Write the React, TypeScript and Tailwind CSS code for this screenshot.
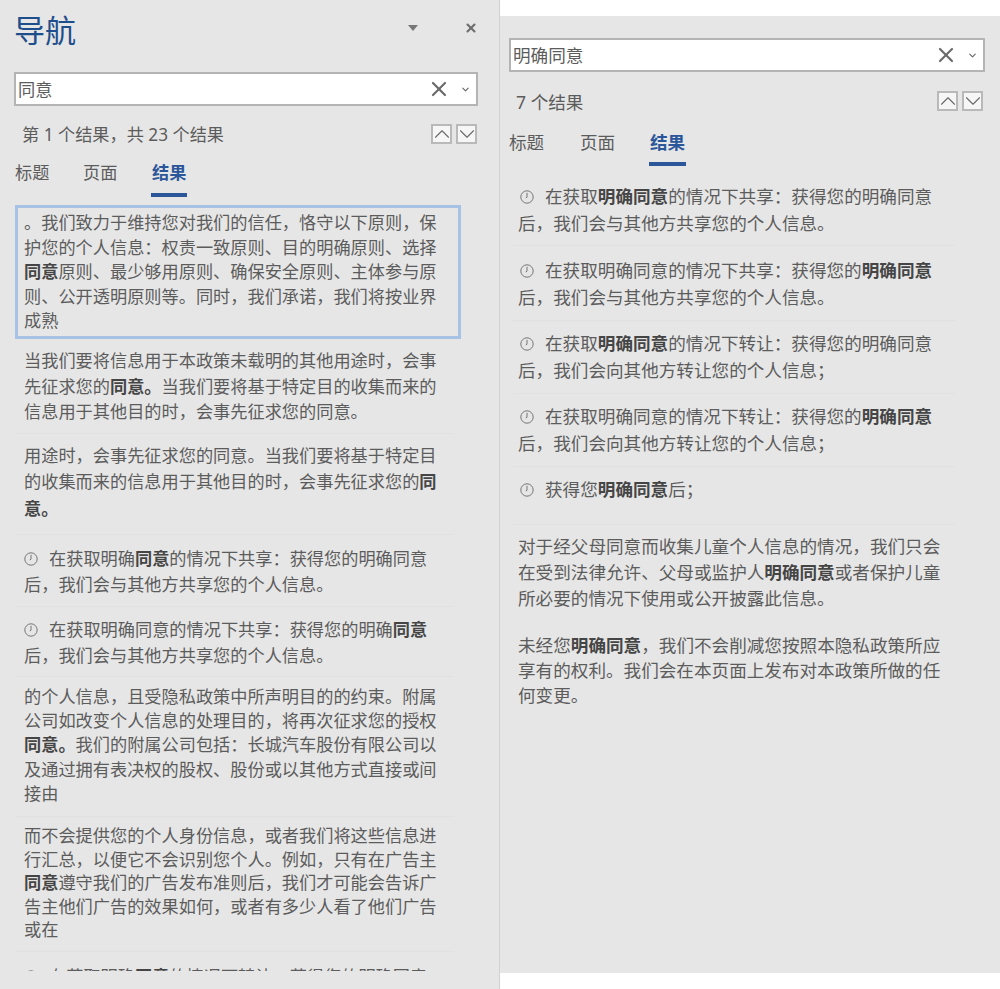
import { ChevronDown, ChevronUp, X } from "lucide-react";

type Result = {
  lines: string[];
  clock?: boolean;
  className: string;
};

const LEFT_RESULTS: Result[] = [
  {
    className: "pt-[9px] pb-[8px] leading-[25.5px]",
    lines: ["当我们要将信息用于本政策未载明的其他用途时，会事", "先征求您的**同意。**当我们要将基于特定目的收集而来的", "信息用于其他目的时，会事先征求您的同意。"],
  },
  {
    className: "pt-[9px] pb-[12px] leading-[26.5px]",
    lines: ["用途时，会事先征求您的同意。当我们要将基于特定目", "的收集而来的信息用于其他目的时，会事先征求您的**同**", "**意。**"],
  },
  {
    clock: true,
    className: "pt-[11px] pb-[8px] leading-[26px]",
    lines: ["在获取明确**同意**的情况下共享：获得您的明确同意", "后，我们会与其他方共享您的个人信息。"],
  },
  {
    clock: true,
    className: "pt-[10px] pb-[8px] leading-[25.5px]",
    lines: ["在获取明确同意的情况下共享：获得您的明确**同意**", "后，我们会与其他方共享您的个人信息。"],
  },
  {
    className: "pt-[8px] pb-[10px] leading-[24.2px]",
    lines: ["的个人信息，且受隐私政策中所声明目的的约束。附属", "公司如改变个人信息的处理目的，将再次征求您的授权", "**同意。**我们的附属公司包括：长城汽车股份有限公司以", "及通过拥有表决权的股权、股份或以其他方式直接或间", "接由"],
  },
  {
    className: "pt-[7px] pb-[9px] leading-[23.5px]",
    lines: ["而不会提供您的个人身份信息，或者我们将这些信息进", "行汇总，以便它不会识别您个人。例如，只有在广告主", "**同意**遵守我们的广告发布准则后，我们才可能会告诉广", "告主他们广告的效果如何，或者有多少人看了他们广告", "或在"],
  },
  {
    clock: true,
    className: "pt-[12px] leading-[26px]",
    lines: ["在获取明确**同意**的情况下转让：获得您的明确同意"],
  },
];

const RIGHT_RESULTS: Result[] = [
  {
    clock: true,
    className: "pt-[8px] pb-[8px] leading-[27px]",
    lines: ["在获取**明确同意**的情况下共享：获得您的明确同意", "后，我们会与其他方共享您的个人信息。"],
  },
  {
    clock: true,
    className: "pt-[11px] pb-[9px] leading-[27px]",
    lines: ["在获取明确同意的情况下共享：获得您的**明确同意**", "后，我们会与其他方共享您的个人信息。"],
  },
  {
    clock: true,
    className: "pt-[9px] pb-[9px] leading-[27px]",
    lines: ["在获取**明确同意**的情况下转让：获得您的明确同意", "后，我们会向其他方转让您的个人信息；"],
  },
  {
    clock: true,
    className: "pt-[9px] pb-[9px] leading-[27px]",
    lines: ["在获取明确同意的情况下转让：获得您的**明确同意**", "后，我们会向其他方转让您的个人信息；"],
  },
  {
    clock: true,
    className: "pt-[9px] pb-[21px] leading-[27px]",
    lines: ["获得您**明确同意**后；"],
  },
  {
    className: "pt-[8px] pb-[10px] leading-[26px]",
    lines: ["对于经父母同意而收集儿童个人信息的情况，我们只会", "在受到法律允许、父母或监护人**明确同意**或者保护儿童", "所必要的情况下使用或公开披露此信息。"],
  },
  {
    className: "pt-[12px] leading-[25px]",
    lines: ["未经您**明确同意**，我们不会削减您按照本隐私政策所应", "享有的权利。我们会在本页面上发布对本政策所做的任", "何变更。"],
  },
];

function Rich({ text }: { text: string }) {
  const parts = text.split("**");
  return (
    <>
      {parts.map((part, i) =>
        i % 2 === 1 ? (
          <b key={i} className="font-bold text-[#454545]">
            {part}
          </b>
        ) : (
          <span key={i}>{part}</span>
        ),
      )}
    </>
  );
}

function ClockIcon({ className }: { className: string }) {
  return (
    <svg viewBox="0 0 14 14" className={`inline-block h-[14px] w-[14px] align-[-1px] ${className}`} fill="none" stroke="#757575" strokeWidth="1">
      <circle cx="7" cy="7" r="6.2" />
      <path d="M7 2.8V7.2L5.8 8" />
    </svg>
  );
}

function ResultItem({ item, pad, clockGap, divider }: { item: Result; pad: string; clockGap: string; divider: boolean }) {
  return (
    <div className={`${pad} ${item.className} ${divider ? "border-b border-[#e1e1e1]" : ""}`}>
      {item.lines.map((line, i) => (
        <div key={i} className="whitespace-nowrap">
          {item.clock && i === 0 && <ClockIcon className={clockGap} />}
          <Rich text={line} />
        </div>
      ))}
    </div>
  );
}

function SearchBox({ value, className }: { value: string; className: string }) {
  return (
    <div className={`flex h-[34px] items-center border-2 border-[#b4b4b4] bg-white pl-[2px] text-[#5c5c5c] ${className}`}>
      <span className="flex-1 pt-[1px]">{value}</span>
      <X size={24} strokeWidth={2.2} className="text-[#6a6a6a]" />
      <ChevronDown size={11} strokeWidth={2.4} className="ml-[9px] mr-[5px] text-[#666666]" />
    </div>
  );
}

function Pager() {
  return (
    <div className="mt-[2px] flex gap-[4px]">
      <div className="flex h-[20px] w-[21px] items-center justify-center border-2 border-[#b9b9b9] bg-[#f6f6f6]">
        <ChevronUp size={26} strokeWidth={1} className="shrink-0 text-[#6a6a6a]" />
      </div>
      <div className="flex h-[20px] w-[21px] items-center justify-center border-2 border-[#b9b9b9] bg-[#f6f6f6]">
        <ChevronDown size={26} strokeWidth={1} className="shrink-0 text-[#6a6a6a]" />
      </div>
    </div>
  );
}

function Tabs({ className, firstWidth, secondWidth }: { className: string; firstWidth: string; secondWidth: string }) {
  return (
    <div className={`flex h-[38px] items-start leading-[26px] text-[#5c5c5c] ${className}`}>
      <span className={firstWidth}>标题</span>
      <span className={secondWidth}>页面</span>
      <span className="relative font-bold text-[#2b579a]">
        结果
        <span className="absolute left-[-1px] right-[-1px] top-[33px] h-[4px] bg-[#2b579a]" />
      </span>
    </div>
  );
}

export default function App() {
  return (
    <div className="flex h-[989px] w-[1000px] overflow-hidden bg-white font-['Noto_Sans','Noto_Sans_CJK_SC',sans-serif] text-[17.2px] text-[#5c5c5c]">
      <div className="flex h-[989px] w-[500px] shrink-0 flex-col border-r border-[#d2d2d2] bg-[#e6e6e6]">
        <div className="flex h-[72px] items-start pl-[14px] pr-[21px]">
          <h1 className="flex-1 pt-[8px] text-[31px] leading-[44px] font-normal text-[#1f4e8c]">导航</h1>
          <div className="mr-[46px] mt-[25px] h-0 w-0 border-x-[5px] border-t-[6px] border-x-transparent border-t-[#777777]" />
          <X size={14} strokeWidth={3.6} className="mt-[21px] text-[#6f6f6f]" />
        </div>
        <SearchBox value="同意" className="mx-[14px] w-[464px]" />
        <div className="flex h-[42px] items-start pl-[22px] pr-[22px] pt-[16px] leading-[26px]">
          <span className="flex-1">第 1 个结果，共 23 个结果</span>
          <Pager />
        </div>
        <Tabs className="ml-[15px] mt-[12px]" firstWidth="w-[68px]" secondWidth="w-[69px]" />
        <div className="mt-[7px] h-[766px] overflow-hidden">
          <div className="ml-[15px] h-[134px] w-[446px] border-[3px] border-[#a8c2e6] pl-[6px] pt-[3px] leading-[24.6px] whitespace-nowrap">
            <div>。我们致力于维持您对我们的信任，恪守以下原则，保</div>
            <div>护您的个人信息：权责一致原则、目的明确原则、选择</div>
            <div>
              <Rich text="**同意**原则、最少够用原则、确保安全原则、主体参与原" />
            </div>
            <div>则、公开透明原则等。同时，我们承诺，我们将按业界</div>
            <div>成熟</div>
          </div>
          {LEFT_RESULTS.map((item, i) => (
            <ResultItem key={i} item={item} pad="ml-[15px] mr-[45px] pl-[9px]" clockGap="mr-[11px]" divider={i < LEFT_RESULTS.length - 1} />
          ))}
        </div>
      </div>

      <div className="mt-[16px] h-[957px] flex-1 bg-[#e6e6e6] text-[17.6px]">
        <SearchBox value="明确同意" className="ml-[9px] mt-[22px] w-[476px]" />
        <div className="flex h-[42px] items-start pl-[16px] pr-[17px] pt-[17px] leading-[26px]">
          <span className="flex-1">7 个结果</span>
          <Pager />
        </div>
        <Tabs className="ml-[9px] mt-[15px]" firstWidth="w-[71px]" secondWidth="w-[70px]" />
        <div className="pt-[8px]">
          {RIGHT_RESULTS.map((item, i) => (
            <ResultItem key={i} item={item} pad="ml-[13px] mr-[45px] pl-[5px]" clockGap="ml-[2px] mr-[11px]" divider={i < 5} />
          ))}
        </div>
      </div>
    </div>
  );
}
